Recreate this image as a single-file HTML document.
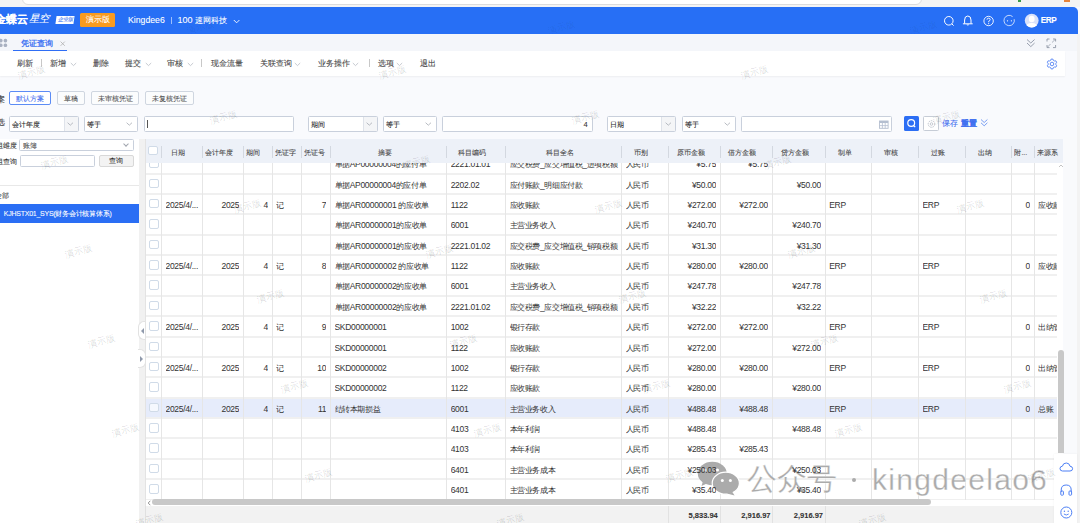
<!DOCTYPE html><html><head><meta charset="utf-8"><style>
*{margin:0;padding:0;box-sizing:border-box}
html,body{width:1080px;height:523px;overflow:hidden}
body{position:relative;background:#f9fafd;font-family:"Liberation Sans",sans-serif;color:#333}
.t,.hd,.btn{-webkit-text-stroke:0.08px currentColor}
.ab{position:absolute}
.t{position:absolute;white-space:nowrap;line-height:1}
.sel{position:absolute;background:#fff;border:1px solid #c9d0dc;border-radius:1.5px}
.dd{position:absolute;top:0;bottom:0;right:0;background:#f4f5f7;border-left:1px solid #dfe3ea}
.chev{position:absolute;width:4px;height:4px;border-right:1px solid #9aa0aa;border-bottom:1px solid #9aa0aa;transform:rotate(45deg)}
.btn{position:absolute;border:1px solid #cfd6e0;border-radius:2px;background:#fbfcfd;font-size:6.9px;color:#555;text-align:center;white-space:nowrap}
.cb{position:absolute;width:9.5px;height:9.5px;border:1px solid #d0dbe8;border-radius:2px;background:#fff}
.vl{position:absolute;width:1px;background:#e6e6e6}
.hl{position:absolute;height:2px;background:#f0f0f0}
.z{font-size:7.6px;letter-spacing:-0.4px}
.cell{position:absolute;white-space:nowrap;overflow:hidden;font-size:8.5px;letter-spacing:-0.3px;color:#333;line-height:20px;height:20.4px;padding-top:1.0px}
.hd{position:absolute;white-space:nowrap;overflow:hidden;font-size:7px;color:#444;line-height:23px;height:23px;padding-top:2.2px}
.wm{position:absolute;font-size:8px;color:rgba(150,150,150,0.22);transform:rotate(-20deg);white-space:nowrap}
</style></head><body>
<div class="ab" style="left:0;top:0;width:1080px;height:7px;background:#f4f4f4"></div>
<div class="ab" style="left:22px;top:-10px;width:900px;height:14.5px;background:#fff;border-radius:6px;border:1px solid #dcdcdc"></div>
<div class="ab" style="left:1018px;top:0;width:3px;height:2px;background:#3a9a48"></div>
<div class="ab" style="left:1064px;top:0;width:6px;height:2px;background:#e8843a"></div>
<div class="ab" style="left:0;top:7px;width:1077.5px;height:26.5px;background:#276ff5;border-top-right-radius:5px"></div>
<div class="t" style="left:-5px;top:14px;font-size:10.8px;color:#fff;font-weight:bold">金蝶云</div>
<div class="t" style="left:29px;top:14.3px;font-size:10.4px;color:#fff;font-style:italic">星空</div>
<div class="ab" style="left:56px;top:15.7px;width:18px;height:7.8px;background:#fff;transform:skewX(-8deg)"></div>
<div class="t" style="left:57.5px;top:17.2px;font-size:5.2px;color:#3a74f0;font-style:italic">企业版</div>
<div class="ab" style="left:80px;top:13px;width:34.5px;height:13.7px;background:#f99b1e;border-radius:1.5px"></div>
<div class="t" style="left:86px;top:16px;font-size:7.8px;color:#fff">演示版</div>
<div class="t" style="left:128px;top:15.7px;font-size:8.7px;color:#fff">Kingdee6</div>
<div class="ab" style="left:170.5px;top:17px;width:0.8px;height:7px;background:rgba(255,255,255,0.55)"></div>
<div class="t" style="left:177.5px;top:15.5px;font-size:9px;color:#fff">100 <span style="font-size:8.2px">速网科技</span></div>
<svg class="ab" style="left:233px;top:19px" width="8" height="5" viewBox="0 0 8 5"><path d="M0.8 1 L3.6 3.8 L6.4 1" fill="none" stroke="#fff" stroke-width="0.9"/></svg>
<svg class="ab" style="left:942px;top:14px" width="14" height="14" viewBox="0 0 14 14"><circle cx="6.8" cy="6.8" r="4.3" fill="none" stroke="#fff" stroke-width="1"/><line x1="9.8" y1="9.8" x2="11.6" y2="11.6" stroke="#fff" stroke-width="1"/></svg>
<svg class="ab" style="left:961px;top:13px" width="14" height="16" viewBox="0 0 14 16"><path d="M3.6 10.6 V7 Q3.6 3 6.8 3 Q10 3 10 7 V10.6" fill="none" stroke="#fff" stroke-width="1"/><path d="M1.9 10.8 H11.7" stroke="#fff" stroke-width="1"/><path d="M5.3 11.6 Q6.8 13.4 8.3 11.6 Z" fill="#fff"/></svg>
<svg class="ab" style="left:982px;top:14px" width="14" height="14" viewBox="0 0 14 14"><circle cx="6.6" cy="7" r="4.7" fill="none" stroke="#fff" stroke-width="0.9"/><path d="M5 5.7 Q5 4.2 6.6 4.2 Q8.2 4.2 8.2 5.6 Q8.2 6.6 6.7 7.2 L6.7 8.3" fill="none" stroke="#fff" stroke-width="0.9"/><circle cx="6.7" cy="9.6" r="0.55" fill="#fff"/></svg>
<svg class="ab" style="left:1003px;top:14px" width="14" height="14" viewBox="0 0 14 14"><path d="M11.2 5.2 A5.2 5.2 0 1 1 9.6 2.6" fill="none" stroke="rgba(255,255,255,0.8)" stroke-width="0.9"/><circle cx="4.5" cy="6.8" r="0.65" fill="#fff"/><circle cx="8.4" cy="6.8" r="0.65" fill="#fff"/></svg>
<svg class="ab" style="left:1024px;top:13.2px" width="16" height="16" viewBox="0 0 16 16"><defs><clipPath id="av"><circle cx="7.7" cy="7.6" r="6.9"/></clipPath></defs><circle cx="7.7" cy="7.6" r="6.9" fill="#d9e2fa"/><g clip-path="url(#av)" fill="#fff"><ellipse cx="7.7" cy="6" rx="2.9" ry="3.3"/><path d="M1.5 15 Q2 10 7.7 10 Q13.4 10 13.9 15 Z"/></g></svg>
<div class="t" style="left:1040.8px;top:16.8px;font-size:8.2px;color:#fff;font-weight:bold;letter-spacing:-0.4px">ERP</div>
<div class="ab" style="left:0;top:33.5px;width:1077px;height:17.8px;background:#f4f6fa"></div>
<div class="ab" style="left:1077px;top:33.5px;width:3px;height:490px;background:#f3f3f3"></div>
<svg class="ab" style="left:-1px;top:37.5px" width="10" height="11" viewBox="0 0 10 11"><rect x="0" y="0.8" width="3.6" height="3.6" rx="1.6" fill="#a9b1c1"/><rect x="4.6" y="0.8" width="3.6" height="3.6" rx="1.6" fill="#a9b1c1"/><rect x="0" y="5.4" width="3.6" height="3.6" rx="1.6" fill="#a9b1c1"/><rect x="4.6" y="5.4" width="3.6" height="3.6" rx="1.6" fill="#a9b1c1"/></svg>
<div class="t" style="left:20.8px;top:38.8px;font-size:8.4px;color:#4274f2;font-weight:bold;-webkit-text-stroke:0">凭证查询</div>
<svg class="ab" style="left:59.5px;top:40.8px" width="6" height="6" viewBox="0 0 6 6"><path d="M0.6 0.6 L4.8 4.8 M4.8 0.6 L0.6 4.8" stroke="#b0b0b0" stroke-width="0.8"/></svg>
<div class="ab" style="left:13px;top:49.7px;width:54px;height:1.3px;background:#2f6ef5"></div>
<svg class="ab" style="left:1026px;top:38px" width="10" height="11" viewBox="0 0 10 11"><path d="M1 1.5 L4.8 5 L8.6 1.5 M1 5 L4.8 8.6 L8.6 5" fill="none" stroke="#8d95a5" stroke-width="0.9"/></svg>
<svg class="ab" style="left:1046px;top:38px" width="11" height="11" viewBox="0 0 11 11"><path d="M1 3.5 V1 H3.5 M7 1 H9.6 V3.5 M9.6 7 V9.6 H7 M3.5 9.6 H1 V7" fill="none" stroke="#8d95a5" stroke-width="0.9"/><path d="M6 4.5 L9 1.6 M4.5 6 L1.6 9" stroke="#8d95a5" stroke-width="0.7"/></svg>
<div class="ab" style="left:0;top:51.3px;width:1065px;height:24.7px;background:#fff;box-shadow:0 1px 1.5px rgba(0,0,0,0.05)"></div>
<div class="t" style="left:16.7px;top:58.7px;font-size:8.3px;color:#444">刷新</div>
<div class="ab" style="left:41.2px;top:59px;width:0.8px;height:8px;background:#c8c8c8"></div>
<div class="t" style="left:50.4px;top:58.7px;font-size:8.3px;color:#444">新增</div>
<svg class="ab" style="left:70px;top:62px" width="8" height="5" viewBox="0 0 8 5"><path d="M0.8 1 L3.5 3.6 L6.2 1" fill="none" stroke="#b8bcc4" stroke-width="0.8"/></svg>
<div class="t" style="left:92.7px;top:58.7px;font-size:8.3px;color:#444">删除</div>
<div class="t" style="left:125.0px;top:58.7px;font-size:8.3px;color:#444">提交</div>
<svg class="ab" style="left:144.5px;top:62px" width="8" height="5" viewBox="0 0 8 5"><path d="M0.8 1 L3.5 3.6 L6.2 1" fill="none" stroke="#b8bcc4" stroke-width="0.8"/></svg>
<div class="t" style="left:167.2px;top:58.7px;font-size:8.3px;color:#444">审核</div>
<svg class="ab" style="left:186.5px;top:62px" width="8" height="5" viewBox="0 0 8 5"><path d="M0.8 1 L3.5 3.6 L6.2 1" fill="none" stroke="#b8bcc4" stroke-width="0.8"/></svg>
<div class="ab" style="left:201.2px;top:59px;width:0.8px;height:8px;background:#c8c8c8"></div>
<div class="t" style="left:211.0px;top:58.7px;font-size:8.3px;color:#444">现金流量</div>
<div class="t" style="left:259.7px;top:58.7px;font-size:8.3px;color:#444">关联查询</div>
<svg class="ab" style="left:294px;top:62px" width="8" height="5" viewBox="0 0 8 5"><path d="M0.8 1 L3.5 3.6 L6.2 1" fill="none" stroke="#b8bcc4" stroke-width="0.8"/></svg>
<div class="t" style="left:318.1px;top:58.7px;font-size:8.3px;color:#444">业务操作</div>
<svg class="ab" style="left:352px;top:62px" width="8" height="5" viewBox="0 0 8 5"><path d="M0.8 1 L3.5 3.6 L6.2 1" fill="none" stroke="#b8bcc4" stroke-width="0.8"/></svg>
<div class="ab" style="left:368.8px;top:59px;width:0.8px;height:8px;background:#c8c8c8"></div>
<div class="t" style="left:377.7px;top:58.7px;font-size:8.3px;color:#444">选项</div>
<svg class="ab" style="left:396px;top:62px" width="8" height="5" viewBox="0 0 8 5"><path d="M0.8 1 L3.5 3.6 L6.2 1" fill="none" stroke="#b8bcc4" stroke-width="0.8"/></svg>
<div class="t" style="left:420.4px;top:58.7px;font-size:8.3px;color:#444">退出</div>
<svg class="ab" style="left:1044.8px;top:57.1px" width="14" height="14" viewBox="0 0 14 14"><path d="M10.90 7.89 L11.69 8.73 L10.84 10.20 L9.72 9.93 L8.18 10.82 L7.85 11.93 L6.15 11.93 L5.82 10.82 L4.28 9.93 L3.16 10.20 L2.31 8.73 L3.10 7.89 L3.10 6.11 L2.31 5.27 L3.16 3.80 L4.28 4.07 L5.82 3.18 L6.15 2.07 L7.85 2.07 L8.18 3.18 L9.72 4.07 L10.84 3.80 L11.69 5.27 L10.90 6.11 Z" fill="none" stroke="#4a7cf3" stroke-width="0.85" stroke-linejoin="round"/><circle cx="7" cy="7" r="1.8" fill="none" stroke="#4a7cf3" stroke-width="0.85"/></svg>
<div class="t" style="left:-3px;top:96px;font-size:7.5px;color:#333">案</div>
<div class="btn" style="left:9.3px;top:90.9px;width:41.8px;height:14.5px;line-height:14.5px;border-color:#5c8cf5;color:#3f6ff0;background:#fff">默认方案</div>
<div class="btn" style="left:57px;top:90.9px;width:27.799999999999997px;height:14.5px;line-height:14.5px;">草稿</div>
<div class="btn" style="left:90.7px;top:90.9px;width:48.7px;height:14.5px;line-height:14.5px;">未审核凭证</div>
<div class="btn" style="left:145.4px;top:90.9px;width:49.0px;height:14.5px;line-height:14.5px;">未复核凭证</div>
<div class="t" style="left:-3.5px;top:119px;font-size:7.5px;color:#333">选</div>
<div class="sel" style="left:9.2px;top:116.3px;width:69.39999999999999px;height:15.4px">
<div class="t" style="left:2.2px;top:3.7px;font-size:7px;color:#222">会计年度</div>
<div class="dd" style="width:14px"></div>
<svg class="ab" style="right:3.5px;top:4.6px" width="7" height="4" viewBox="0 0 7 4"><path d="M0.6 0.7 L3.3 3.2 L6 0.7" fill="none" stroke="#a6abb3" stroke-width="0.8"/></svg>
</div>
<div class="sel" style="left:84.2px;top:116.3px;width:54.10000000000001px;height:15.4px">
<div class="t" style="left:2.2px;top:3.7px;font-size:7px;color:#222">等于</div>
<svg class="ab" style="right:3.8px;top:4.6px" width="7" height="4" viewBox="0 0 7 4"><path d="M0.6 0.7 L3.3 3.2 L6 0.7" fill="none" stroke="#a6abb3" stroke-width="0.8"/></svg>
</div>
<div class="sel" style="left:143.6px;top:116.3px;width:150.50000000000003px;height:15.4px"><div class="ab" style="left:2.5px;top:3px;width:0.8px;height:8px;background:#555"></div></div>
<div class="sel" style="left:308px;top:116.3px;width:69.5px;height:15.4px">
<div class="t" style="left:2.2px;top:3.7px;font-size:7px;color:#222">期间</div>
<div class="dd" style="width:14px"></div>
<svg class="ab" style="right:3.5px;top:4.6px" width="7" height="4" viewBox="0 0 7 4"><path d="M0.6 0.7 L3.3 3.2 L6 0.7" fill="none" stroke="#a6abb3" stroke-width="0.8"/></svg>
</div>
<div class="sel" style="left:383px;top:116.3px;width:54px;height:15.4px">
<div class="t" style="left:2.2px;top:3.7px;font-size:7px;color:#222">等于</div>
<svg class="ab" style="right:3.8px;top:4.6px" width="7" height="4" viewBox="0 0 7 4"><path d="M0.6 0.7 L3.3 3.2 L6 0.7" fill="none" stroke="#a6abb3" stroke-width="0.8"/></svg>
</div>
<div class="sel" style="left:442.4px;top:116.3px;width:150.39999999999998px;height:15.4px"><div class="t" style="right:4px;top:4px;font-size:7.5px;color:#333">4</div></div>
<div class="sel" style="left:606.7px;top:116.3px;width:69.79999999999995px;height:15.4px">
<div class="t" style="left:2.2px;top:3.7px;font-size:7px;color:#222">日期</div>
<div class="dd" style="width:14px"></div>
<svg class="ab" style="right:3.5px;top:4.6px" width="7" height="4" viewBox="0 0 7 4"><path d="M0.6 0.7 L3.3 3.2 L6 0.7" fill="none" stroke="#a6abb3" stroke-width="0.8"/></svg>
</div>
<div class="sel" style="left:681.7px;top:116.3px;width:54.0px;height:15.4px">
<div class="t" style="left:2.2px;top:3.7px;font-size:7px;color:#222">等于</div>
<svg class="ab" style="right:3.8px;top:4.6px" width="7" height="4" viewBox="0 0 7 4"><path d="M0.6 0.7 L3.3 3.2 L6 0.7" fill="none" stroke="#a6abb3" stroke-width="0.8"/></svg>
</div>
<div class="sel" style="left:741.3px;top:116.3px;width:150.5px;height:15.4px"><svg class="ab" style="right:2px;top:2.5px" width="10" height="9" viewBox="0 0 10 9"><rect x="0.5" y="1" width="8.6" height="7.3" fill="none" stroke="#b5bfd0" stroke-width="0.9"/><rect x="0.5" y="1" width="8.6" height="2" fill="#b5bfd0"/><path d="M3.4 3 V8.3 M6.2 3 V8.3 M0.5 5.6 H9.1" stroke="#b5bfd0" stroke-width="0.8"/></svg></div>
<div class="ab" style="left:903.7px;top:115.9px;width:15px;height:14.8px;background:#2c6ef4;border-radius:1.5px"></div>
<svg class="ab" style="left:904px;top:116px" width="15" height="15" viewBox="0 0 15 15"><circle cx="7.2" cy="7" r="3.4" fill="none" stroke="#fff" stroke-width="1.2"/><line x1="9.6" y1="9.5" x2="11.2" y2="11.1" stroke="#fff" stroke-width="1.2"/></svg>
<div class="ab" style="left:923.2px;top:116px;width:15.4px;height:14.8px;border:1px solid #c6ccd6;border-radius:1.5px;background:#fff"></div>
<svg class="ab" style="left:923.5px;top:116.5px" width="15" height="14" viewBox="0 0 15 14"><circle cx="7.5" cy="7" r="3.3" fill="none" stroke="#b8bec8" stroke-width="0.9" stroke-dasharray="1.6 0.8"/><circle cx="7.5" cy="7" r="1.3" fill="none" stroke="#b8bec8" stroke-width="0.8"/></svg>
<div class="t" style="left:941.5px;top:119.5px;font-size:8px;color:#3f6ff0">保存</div>
<div class="t" style="left:961px;top:119.5px;font-size:8px;color:#3f6ff0;font-weight:bold">重置</div>
<svg class="ab" style="left:980px;top:118px" width="9" height="11" viewBox="0 0 9 11"><path d="M1 1.5 L4.2 4.5 L7.4 1.5 M1 4.8 L4.2 7.8 L7.4 4.8" fill="none" stroke="#6b93f0" stroke-width="0.9"/></svg>
<div class="ab" style="left:0;top:138.6px;width:138.8px;height:386.5px;background:#fff"></div>
<div class="ab" style="left:138.8px;top:138.6px;width:6.8px;height:386.5px;background:#f1f1f1"></div>
<div class="t" style="left:-4.5px;top:142.2px;font-size:7px;color:#333">组维度</div>
<div class="sel" style="left:19.4px;top:139.3px;width:114.3px;height:11.5px"><div class="t" style="left:2.5px;top:1.8px;font-size:7px;color:#555">账簿</div><div class="chev" style="right:5px;top:1.5px;border-color:#a0a5ae"></div></div>
<div class="t" style="left:-4.5px;top:157.8px;font-size:7px;color:#333">组查询</div>
<div class="sel" style="left:20.1px;top:155.1px;width:74.6px;height:11.7px"></div>
<div class="btn" style="left:99.3px;top:155.1px;width:34.4px;height:11.7px;line-height:9.7px;background:#f3f3f3;border-color:#d8d8d8;color:#333;font-size:7px">查询</div>
<div class="ab" style="left:0;top:185px;width:138.8px;height:1px;background:#e8e8e8"></div>
<div class="t" style="left:-5px;top:191.5px;font-size:7px;color:#333">全部</div>
<div class="ab" style="left:0;top:204.2px;width:138.5px;height:18.6px;background:#2a6ef4"></div>
<div class="t" style="left:3.8px;top:209.5px;font-size:7px;color:#fff;letter-spacing:-0.25px">KJHSTX01_SYS(财务会计核算体系)</div>
<div class="ab" style="left:138.2px;top:321.3px;width:8px;height:18.3px;background:#fff;border:1px solid #e2e2e2;border-right:none;border-radius:6px 0 0 6px"></div>
<div class="ab" style="left:140.8px;top:327.8px;width:0;height:0;border-top:3.3px solid transparent;border-bottom:3.3px solid transparent;border-right:3.6px solid #8f99ab"></div>
<div class="ab" style="left:137.5px;top:348.8px;width:8px;height:19px;background:#fff;border:1px solid #e2e2e2;border-left:none;border-radius:0 6px 6px 0"></div>
<div class="ab" style="left:139.6px;top:355.8px;width:0;height:0;border-top:3.3px solid transparent;border-bottom:3.3px solid transparent;border-left:3.6px solid #8f99ab"></div>
<div class="ab" style="left:145.6px;top:139px;width:917.9px;height:384px;background:#fff"></div>
<div class="ab" style="left:145.6px;top:139px;width:917.9px;height:23.5px;background:#edf1f8"></div>
<div class="ab" style="left:145.6px;top:397.625px;width:911.6999999999999px;height:20.375px;background:#e6ecfb"></div>
<div class="hl" style="left:145.6px;top:172.5px;width:911.6999999999999px"></div>
<div class="hl" style="left:145.6px;top:192.875px;width:911.6999999999999px"></div>
<div class="hl" style="left:145.6px;top:213.25px;width:911.6999999999999px"></div>
<div class="hl" style="left:145.6px;top:233.625px;width:911.6999999999999px"></div>
<div class="hl" style="left:145.6px;top:254.0px;width:911.6999999999999px"></div>
<div class="hl" style="left:145.6px;top:274.375px;width:911.6999999999999px"></div>
<div class="hl" style="left:145.6px;top:294.75px;width:911.6999999999999px"></div>
<div class="hl" style="left:145.6px;top:315.125px;width:911.6999999999999px"></div>
<div class="hl" style="left:145.6px;top:335.5px;width:911.6999999999999px"></div>
<div class="hl" style="left:145.6px;top:355.875px;width:911.6999999999999px"></div>
<div class="hl" style="left:145.6px;top:376.25px;width:911.6999999999999px"></div>
<div class="hl" style="left:145.6px;top:396.625px;width:911.6999999999999px"></div>
<div class="hl" style="left:145.6px;top:417.0px;width:911.6999999999999px"></div>
<div class="hl" style="left:145.6px;top:437.375px;width:911.6999999999999px"></div>
<div class="hl" style="left:145.6px;top:457.75px;width:911.6999999999999px"></div>
<div class="hl" style="left:145.6px;top:478.125px;width:911.6999999999999px"></div>
<div class="hl" style="left:145.6px;top:498.5px;width:911.6999999999999px"></div>
<div class="vl" style="left:161.2px;top:162.5px;height:337px"></div>
<div class="vl" style="left:202.1px;top:162.5px;height:337px"></div>
<div class="vl" style="left:243.2px;top:162.5px;height:337px"></div>
<div class="vl" style="left:271.9px;top:162.5px;height:337px"></div>
<div class="vl" style="left:301.0px;top:162.5px;height:337px"></div>
<div class="vl" style="left:330.2px;top:162.5px;height:337px"></div>
<div class="vl" style="left:446.4px;top:162.5px;height:337px"></div>
<div class="vl" style="left:505.2px;top:162.5px;height:337px"></div>
<div class="vl" style="left:621.2px;top:162.5px;height:337px"></div>
<div class="vl" style="left:668.0px;top:162.5px;height:337px"></div>
<div class="vl" style="left:720.1px;top:162.5px;height:337px"></div>
<div class="vl" style="left:771.9px;top:162.5px;height:337px"></div>
<div class="vl" style="left:824.9px;top:162.5px;height:337px"></div>
<div class="vl" style="left:871.3px;top:162.5px;height:337px"></div>
<div class="vl" style="left:918.2px;top:162.5px;height:337px"></div>
<div class="vl" style="left:964.7px;top:162.5px;height:337px"></div>
<div class="vl" style="left:1011.4px;top:162.5px;height:337px"></div>
<div class="vl" style="left:1034.0px;top:162.5px;height:337px"></div>
<div class="vl" style="left:145.1px;top:139px;height:384px;background:#e3e3e3"></div>
<div class="vl" style="left:161.2px;top:145.5px;height:12px;background:#d3d8e0"></div>
<div class="hd" style="left:161.7px;top:139px;width:32.900000000000006px;text-align:center">日期</div>
<div class="vl" style="left:202.1px;top:145.5px;height:12px;background:#d3d8e0"></div>
<div class="hd" style="left:205.1px;top:139px;width:39.099999999999994px">会计年度</div>
<div class="vl" style="left:243.2px;top:145.5px;height:12px;background:#d3d8e0"></div>
<div class="hd" style="left:246.2px;top:139px;width:26.69999999999999px">期间</div>
<div class="vl" style="left:271.9px;top:145.5px;height:12px;background:#d3d8e0"></div>
<div class="hd" style="left:274.9px;top:139px;width:27.100000000000023px">凭证字</div>
<div class="vl" style="left:301.0px;top:145.5px;height:12px;background:#d3d8e0"></div>
<div class="hd" style="left:304.0px;top:139px;width:27.19999999999999px">凭证号</div>
<div class="vl" style="left:330.2px;top:145.5px;height:12px;background:#d3d8e0"></div>
<div class="hd" style="left:330.7px;top:139px;width:108.19999999999999px;text-align:center">摘要</div>
<div class="vl" style="left:446.4px;top:145.5px;height:12px;background:#d3d8e0"></div>
<div class="hd" style="left:446.9px;top:139px;width:50.80000000000001px;text-align:center">科目编码</div>
<div class="vl" style="left:505.2px;top:145.5px;height:12px;background:#d3d8e0"></div>
<div class="hd" style="left:505.7px;top:139px;width:108.00000000000006px;text-align:center">科目全名</div>
<div class="vl" style="left:621.2px;top:145.5px;height:12px;background:#d3d8e0"></div>
<div class="hd" style="left:621.7px;top:139px;width:38.799999999999955px;text-align:center">币别</div>
<div class="vl" style="left:668.0px;top:145.5px;height:12px;background:#d3d8e0"></div>
<div class="hd" style="left:668.5px;top:139px;width:44.10000000000002px;text-align:center">原币金额</div>
<div class="vl" style="left:720.1px;top:145.5px;height:12px;background:#d3d8e0"></div>
<div class="hd" style="left:720.6px;top:139px;width:43.799999999999955px;text-align:center">借方金额</div>
<div class="vl" style="left:771.9px;top:145.5px;height:12px;background:#d3d8e0"></div>
<div class="hd" style="left:772.4px;top:139px;width:45.0px;text-align:center">贷方金额</div>
<div class="vl" style="left:824.9px;top:145.5px;height:12px;background:#d3d8e0"></div>
<div class="hd" style="left:825.4px;top:139px;width:38.39999999999998px;text-align:center">制单</div>
<div class="vl" style="left:871.3px;top:145.5px;height:12px;background:#d3d8e0"></div>
<div class="hd" style="left:871.8px;top:139px;width:38.90000000000009px;text-align:center">审核</div>
<div class="vl" style="left:918.2px;top:145.5px;height:12px;background:#d3d8e0"></div>
<div class="hd" style="left:918.7px;top:139px;width:38.5px;text-align:center">过账</div>
<div class="vl" style="left:964.7px;top:145.5px;height:12px;background:#d3d8e0"></div>
<div class="hd" style="left:965.2px;top:139px;width:38.69999999999993px;text-align:center">出纳</div>
<div class="vl" style="left:1011.4px;top:145.5px;height:12px;background:#d3d8e0"></div>
<div class="hd" style="left:1014.4px;top:139px;width:20.600000000000023px">附...</div>
<div class="vl" style="left:1034.0px;top:145.5px;height:12px;background:#d3d8e0"></div>
<div class="hd" style="left:1037.0px;top:139px;width:26.5px">来源系</div>
<div class="cb" style="left:148.4px;top:146.3px;width:9.2px;height:9.2px"></div>
<svg class="ab" style="left:696px;top:460px" width="46" height="36" viewBox="0 0 46 36"><ellipse cx="16.3" cy="13.5" rx="14.5" ry="11.8" fill="#ababab"/><path d="M7 21 L5.5 26 L12 23 Z" fill="#ababab"/><ellipse cx="29.8" cy="23.2" rx="13.6" ry="11" fill="#ababab" stroke="#fff" stroke-width="1.2"/><path d="M36 31.5 L38.6 35.4 L31 33.5 Z" fill="#ababab"/><circle cx="9" cy="10" r="1.5" fill="#fff"/><circle cx="21.5" cy="10" r="1.5" fill="#fff"/><circle cx="26.3" cy="20.5" r="1.5" fill="#fff"/><circle cx="34.4" cy="20.5" r="1.5" fill="#fff"/></svg>
<div class="t" style="left:747px;top:464px;font-size:30px;color:#ababab;-webkit-text-stroke:0.3px #fff">公众号</div>
<div class="ab" style="left:852px;top:478px;width:4px;height:4px;border-radius:2px;background:#ababab"></div>
<div class="t" style="left:872px;top:465px;font-size:30px;color:#ababab;letter-spacing:1.3px;-webkit-text-stroke:0.3px #fff">kingdeelao6</div>
<div class="ab" style="left:0;top:162.5px;width:1080px;height:337px;overflow:hidden">
<div class="cb" style="left:149px;top:-4.375px;"></div>
<div class="cell" style="left:334.5px;top:-9.375px;width:112.39999999999999px"><span class="z">单据</span>AP00000004<span class="z">的应付单</span></div>
<div class="cell" style="left:450.7px;top:-9.375px;width:55.000000000000014px">2221.01.01</div>
<div class="cell" style="left:509.5px;top:-9.375px;width:112.20000000000006px"><span class="z">应交税费</span>_<span class="z">应交增值税</span>_<span class="z">进项税额</span></div>
<div class="cell" style="left:625.5px;top:-9.375px;width:42.99999999999996px"><span class="z">人民币</span></div>
<div class="cell" style="left:668.5px;top:-9.375px;width:47.60000000000002px;text-align:right">¥5.75</div>
<div class="cell" style="left:720.6px;top:-9.375px;width:47.299999999999955px;text-align:right">¥5.75</div>
<div class="cb" style="left:149px;top:16.0px;"></div>
<div class="cell" style="left:334.5px;top:11.0px;width:112.39999999999999px"><span class="z">单据</span>AP00000004<span class="z">的应付单</span></div>
<div class="cell" style="left:450.7px;top:11.0px;width:55.000000000000014px">2202.02</div>
<div class="cell" style="left:509.5px;top:11.0px;width:112.20000000000006px"><span class="z">应付账款</span>_<span class="z">明细应付款</span></div>
<div class="cell" style="left:625.5px;top:11.0px;width:42.99999999999996px"><span class="z">人民币</span></div>
<div class="cell" style="left:668.5px;top:11.0px;width:47.60000000000002px;text-align:right">¥50.00</div>
<div class="cell" style="left:772.4px;top:11.0px;width:48.5px;text-align:right">¥50.00</div>
<div class="cb" style="left:149px;top:36.375px;"></div>
<div class="cell" style="left:165.5px;top:31.375px;width:37.10000000000001px">2025/4/...</div>
<div class="cell" style="left:202.6px;top:31.375px;width:36.599999999999994px;text-align:right">2025</div>
<div class="cell" style="left:243.7px;top:31.375px;width:24.19999999999999px;text-align:right">4</div>
<div class="cell" style="left:276.2px;top:31.375px;width:25.300000000000022px"><span class="z">记</span></div>
<div class="cell" style="left:301.5px;top:31.375px;width:24.69999999999999px;text-align:right">7</div>
<div class="cell" style="left:334.5px;top:31.375px;width:112.39999999999999px"><span class="z">单据</span>AR00000001 <span class="z">的应收单</span></div>
<div class="cell" style="left:450.7px;top:31.375px;width:55.000000000000014px">1122</div>
<div class="cell" style="left:509.5px;top:31.375px;width:112.20000000000006px"><span class="z">应收账款</span></div>
<div class="cell" style="left:625.5px;top:31.375px;width:42.99999999999996px"><span class="z">人民币</span></div>
<div class="cell" style="left:668.5px;top:31.375px;width:47.60000000000002px;text-align:right">¥272.00</div>
<div class="cell" style="left:720.6px;top:31.375px;width:47.299999999999955px;text-align:right">¥272.00</div>
<div class="cell" style="left:829.1999999999999px;top:31.375px;width:42.59999999999998px">ERP</div>
<div class="cell" style="left:922.5px;top:31.375px;width:42.7px">ERP</div>
<div class="cell" style="left:1011.9px;top:31.375px;width:18.100000000000023px;text-align:right">0</div>
<div class="cell" style="left:1038.3px;top:31.375px;width:18.999999999999954px"><span class="z">应收款管理</span></div>
<div class="cb" style="left:149px;top:56.75px;"></div>
<div class="cell" style="left:334.5px;top:51.75px;width:112.39999999999999px"><span class="z">单据</span>AR00000001<span class="z">的应收单</span></div>
<div class="cell" style="left:450.7px;top:51.75px;width:55.000000000000014px">6001</div>
<div class="cell" style="left:509.5px;top:51.75px;width:112.20000000000006px"><span class="z">主营业务收入</span></div>
<div class="cell" style="left:625.5px;top:51.75px;width:42.99999999999996px"><span class="z">人民币</span></div>
<div class="cell" style="left:668.5px;top:51.75px;width:47.60000000000002px;text-align:right">¥240.70</div>
<div class="cell" style="left:772.4px;top:51.75px;width:48.5px;text-align:right">¥240.70</div>
<div class="cb" style="left:149px;top:77.125px;"></div>
<div class="cell" style="left:334.5px;top:72.125px;width:112.39999999999999px"><span class="z">单据</span>AR00000001<span class="z">的应收单</span></div>
<div class="cell" style="left:450.7px;top:72.125px;width:55.000000000000014px">2221.01.02</div>
<div class="cell" style="left:509.5px;top:72.125px;width:112.20000000000006px"><span class="z">应交税费</span>_<span class="z">应交增值税</span>_<span class="z">销项税额</span></div>
<div class="cell" style="left:625.5px;top:72.125px;width:42.99999999999996px"><span class="z">人民币</span></div>
<div class="cell" style="left:668.5px;top:72.125px;width:47.60000000000002px;text-align:right">¥31.30</div>
<div class="cell" style="left:772.4px;top:72.125px;width:48.5px;text-align:right">¥31.30</div>
<div class="cb" style="left:149px;top:97.5px;"></div>
<div class="cell" style="left:165.5px;top:92.5px;width:37.10000000000001px">2025/4/...</div>
<div class="cell" style="left:202.6px;top:92.5px;width:36.599999999999994px;text-align:right">2025</div>
<div class="cell" style="left:243.7px;top:92.5px;width:24.19999999999999px;text-align:right">4</div>
<div class="cell" style="left:276.2px;top:92.5px;width:25.300000000000022px"><span class="z">记</span></div>
<div class="cell" style="left:301.5px;top:92.5px;width:24.69999999999999px;text-align:right">8</div>
<div class="cell" style="left:334.5px;top:92.5px;width:112.39999999999999px"><span class="z">单据</span>AR00000002 <span class="z">的应收单</span></div>
<div class="cell" style="left:450.7px;top:92.5px;width:55.000000000000014px">1122</div>
<div class="cell" style="left:509.5px;top:92.5px;width:112.20000000000006px"><span class="z">应收账款</span></div>
<div class="cell" style="left:625.5px;top:92.5px;width:42.99999999999996px"><span class="z">人民币</span></div>
<div class="cell" style="left:668.5px;top:92.5px;width:47.60000000000002px;text-align:right">¥280.00</div>
<div class="cell" style="left:720.6px;top:92.5px;width:47.299999999999955px;text-align:right">¥280.00</div>
<div class="cell" style="left:829.1999999999999px;top:92.5px;width:42.59999999999998px">ERP</div>
<div class="cell" style="left:922.5px;top:92.5px;width:42.7px">ERP</div>
<div class="cell" style="left:1011.9px;top:92.5px;width:18.100000000000023px;text-align:right">0</div>
<div class="cell" style="left:1038.3px;top:92.5px;width:18.999999999999954px"><span class="z">应收款管理</span></div>
<div class="cb" style="left:149px;top:117.875px;"></div>
<div class="cell" style="left:334.5px;top:112.875px;width:112.39999999999999px"><span class="z">单据</span>AR00000002<span class="z">的应收单</span></div>
<div class="cell" style="left:450.7px;top:112.875px;width:55.000000000000014px">6001</div>
<div class="cell" style="left:509.5px;top:112.875px;width:112.20000000000006px"><span class="z">主营业务收入</span></div>
<div class="cell" style="left:625.5px;top:112.875px;width:42.99999999999996px"><span class="z">人民币</span></div>
<div class="cell" style="left:668.5px;top:112.875px;width:47.60000000000002px;text-align:right">¥247.78</div>
<div class="cell" style="left:772.4px;top:112.875px;width:48.5px;text-align:right">¥247.78</div>
<div class="cb" style="left:149px;top:138.25px;"></div>
<div class="cell" style="left:334.5px;top:133.25px;width:112.39999999999999px"><span class="z">单据</span>AR00000002<span class="z">的应收单</span></div>
<div class="cell" style="left:450.7px;top:133.25px;width:55.000000000000014px">2221.01.02</div>
<div class="cell" style="left:509.5px;top:133.25px;width:112.20000000000006px"><span class="z">应交税费</span>_<span class="z">应交增值税</span>_<span class="z">销项税额</span></div>
<div class="cell" style="left:625.5px;top:133.25px;width:42.99999999999996px"><span class="z">人民币</span></div>
<div class="cell" style="left:668.5px;top:133.25px;width:47.60000000000002px;text-align:right">¥32.22</div>
<div class="cell" style="left:772.4px;top:133.25px;width:48.5px;text-align:right">¥32.22</div>
<div class="cb" style="left:149px;top:158.625px;"></div>
<div class="cell" style="left:165.5px;top:153.625px;width:37.10000000000001px">2025/4/...</div>
<div class="cell" style="left:202.6px;top:153.625px;width:36.599999999999994px;text-align:right">2025</div>
<div class="cell" style="left:243.7px;top:153.625px;width:24.19999999999999px;text-align:right">4</div>
<div class="cell" style="left:276.2px;top:153.625px;width:25.300000000000022px"><span class="z">记</span></div>
<div class="cell" style="left:301.5px;top:153.625px;width:24.69999999999999px;text-align:right">9</div>
<div class="cell" style="left:334.5px;top:153.625px;width:112.39999999999999px">SKD00000001</div>
<div class="cell" style="left:450.7px;top:153.625px;width:55.000000000000014px">1002</div>
<div class="cell" style="left:509.5px;top:153.625px;width:112.20000000000006px"><span class="z">银行存款</span></div>
<div class="cell" style="left:625.5px;top:153.625px;width:42.99999999999996px"><span class="z">人民币</span></div>
<div class="cell" style="left:668.5px;top:153.625px;width:47.60000000000002px;text-align:right">¥272.00</div>
<div class="cell" style="left:720.6px;top:153.625px;width:47.299999999999955px;text-align:right">¥272.00</div>
<div class="cell" style="left:829.1999999999999px;top:153.625px;width:42.59999999999998px">ERP</div>
<div class="cell" style="left:922.5px;top:153.625px;width:42.7px">ERP</div>
<div class="cell" style="left:1011.9px;top:153.625px;width:18.100000000000023px;text-align:right">0</div>
<div class="cell" style="left:1038.3px;top:153.625px;width:18.999999999999954px"><span class="z">出纳管理</span></div>
<div class="cb" style="left:149px;top:179.0px;"></div>
<div class="cell" style="left:334.5px;top:174.0px;width:112.39999999999999px">SKD00000001</div>
<div class="cell" style="left:450.7px;top:174.0px;width:55.000000000000014px">1122</div>
<div class="cell" style="left:509.5px;top:174.0px;width:112.20000000000006px"><span class="z">应收账款</span></div>
<div class="cell" style="left:625.5px;top:174.0px;width:42.99999999999996px"><span class="z">人民币</span></div>
<div class="cell" style="left:668.5px;top:174.0px;width:47.60000000000002px;text-align:right">¥272.00</div>
<div class="cell" style="left:772.4px;top:174.0px;width:48.5px;text-align:right">¥272.00</div>
<div class="cb" style="left:149px;top:199.375px;"></div>
<div class="cell" style="left:165.5px;top:194.375px;width:37.10000000000001px">2025/4/...</div>
<div class="cell" style="left:202.6px;top:194.375px;width:36.599999999999994px;text-align:right">2025</div>
<div class="cell" style="left:243.7px;top:194.375px;width:24.19999999999999px;text-align:right">4</div>
<div class="cell" style="left:276.2px;top:194.375px;width:25.300000000000022px"><span class="z">记</span></div>
<div class="cell" style="left:301.5px;top:194.375px;width:24.69999999999999px;text-align:right">10</div>
<div class="cell" style="left:334.5px;top:194.375px;width:112.39999999999999px">SKD00000002</div>
<div class="cell" style="left:450.7px;top:194.375px;width:55.000000000000014px">1002</div>
<div class="cell" style="left:509.5px;top:194.375px;width:112.20000000000006px"><span class="z">银行存款</span></div>
<div class="cell" style="left:625.5px;top:194.375px;width:42.99999999999996px"><span class="z">人民币</span></div>
<div class="cell" style="left:668.5px;top:194.375px;width:47.60000000000002px;text-align:right">¥280.00</div>
<div class="cell" style="left:720.6px;top:194.375px;width:47.299999999999955px;text-align:right">¥280.00</div>
<div class="cell" style="left:829.1999999999999px;top:194.375px;width:42.59999999999998px">ERP</div>
<div class="cell" style="left:922.5px;top:194.375px;width:42.7px">ERP</div>
<div class="cell" style="left:1011.9px;top:194.375px;width:18.100000000000023px;text-align:right">0</div>
<div class="cell" style="left:1038.3px;top:194.375px;width:18.999999999999954px"><span class="z">出纳管理</span></div>
<div class="cb" style="left:149px;top:219.75px;"></div>
<div class="cell" style="left:334.5px;top:214.75px;width:112.39999999999999px">SKD00000002</div>
<div class="cell" style="left:450.7px;top:214.75px;width:55.000000000000014px">1122</div>
<div class="cell" style="left:509.5px;top:214.75px;width:112.20000000000006px"><span class="z">应收账款</span></div>
<div class="cell" style="left:625.5px;top:214.75px;width:42.99999999999996px"><span class="z">人民币</span></div>
<div class="cell" style="left:668.5px;top:214.75px;width:47.60000000000002px;text-align:right">¥280.00</div>
<div class="cell" style="left:772.4px;top:214.75px;width:48.5px;text-align:right">¥280.00</div>
<div class="cb" style="left:149px;top:240.125px;background:#f5f8fe;"></div>
<div class="cell" style="left:165.5px;top:235.125px;width:37.10000000000001px">2025/4/...</div>
<div class="cell" style="left:202.6px;top:235.125px;width:36.599999999999994px;text-align:right">2025</div>
<div class="cell" style="left:243.7px;top:235.125px;width:24.19999999999999px;text-align:right">4</div>
<div class="cell" style="left:276.2px;top:235.125px;width:25.300000000000022px"><span class="z">记</span></div>
<div class="cell" style="left:301.5px;top:235.125px;width:24.69999999999999px;text-align:right">11</div>
<div class="cell" style="left:334.5px;top:235.125px;width:112.39999999999999px"><span class="z">结转本期损益</span></div>
<div class="cell" style="left:450.7px;top:235.125px;width:55.000000000000014px">6001</div>
<div class="cell" style="left:509.5px;top:235.125px;width:112.20000000000006px"><span class="z">主营业务收入</span></div>
<div class="cell" style="left:625.5px;top:235.125px;width:42.99999999999996px"><span class="z">人民币</span></div>
<div class="cell" style="left:668.5px;top:235.125px;width:47.60000000000002px;text-align:right">¥488.48</div>
<div class="cell" style="left:720.6px;top:235.125px;width:47.299999999999955px;text-align:right">¥488.48</div>
<div class="cell" style="left:829.1999999999999px;top:235.125px;width:42.59999999999998px">ERP</div>
<div class="cell" style="left:922.5px;top:235.125px;width:42.7px">ERP</div>
<div class="cell" style="left:1011.9px;top:235.125px;width:18.100000000000023px;text-align:right">0</div>
<div class="cell" style="left:1038.3px;top:235.125px;width:18.999999999999954px"><span class="z">总账</span></div>
<div class="cb" style="left:149px;top:260.5px;"></div>
<div class="cell" style="left:450.7px;top:255.5px;width:55.000000000000014px">4103</div>
<div class="cell" style="left:509.5px;top:255.5px;width:112.20000000000006px"><span class="z">本年利润</span></div>
<div class="cell" style="left:625.5px;top:255.5px;width:42.99999999999996px"><span class="z">人民币</span></div>
<div class="cell" style="left:668.5px;top:255.5px;width:47.60000000000002px;text-align:right">¥488.48</div>
<div class="cell" style="left:772.4px;top:255.5px;width:48.5px;text-align:right">¥488.48</div>
<div class="cb" style="left:149px;top:280.875px;"></div>
<div class="cell" style="left:450.7px;top:275.875px;width:55.000000000000014px">4103</div>
<div class="cell" style="left:509.5px;top:275.875px;width:112.20000000000006px"><span class="z">本年利润</span></div>
<div class="cell" style="left:625.5px;top:275.875px;width:42.99999999999996px"><span class="z">人民币</span></div>
<div class="cell" style="left:668.5px;top:275.875px;width:47.60000000000002px;text-align:right">¥285.43</div>
<div class="cell" style="left:720.6px;top:275.875px;width:47.299999999999955px;text-align:right">¥285.43</div>
<div class="cb" style="left:149px;top:301.25px;"></div>
<div class="cell" style="left:450.7px;top:296.25px;width:55.000000000000014px">6401</div>
<div class="cell" style="left:509.5px;top:296.25px;width:112.20000000000006px"><span class="z">主营业务成本</span></div>
<div class="cell" style="left:625.5px;top:296.25px;width:42.99999999999996px"><span class="z">人民币</span></div>
<div class="cell" style="left:668.5px;top:296.25px;width:47.60000000000002px;text-align:right">¥250.03</div>
<div class="cell" style="left:772.4px;top:296.25px;width:48.5px;text-align:right">¥250.03</div>
<div class="cb" style="left:149px;top:321.625px;"></div>
<div class="cell" style="left:450.7px;top:316.625px;width:55.000000000000014px">6401</div>
<div class="cell" style="left:509.5px;top:316.625px;width:112.20000000000006px"><span class="z">主营业务成本</span></div>
<div class="cell" style="left:625.5px;top:316.625px;width:42.99999999999996px"><span class="z">人民币</span></div>
<div class="cell" style="left:668.5px;top:316.625px;width:47.60000000000002px;text-align:right">¥35.40</div>
<div class="cell" style="left:772.4px;top:316.625px;width:48.5px;text-align:right">¥35.40</div>
</div>
<div class="ab" style="left:145.6px;top:499.5px;width:911.6999999999999px;height:6px;background:#fff"></div>
<svg class="ab" style="left:147px;top:499.5px" width="5" height="6" viewBox="0 0 5 6"><path d="M3.3 0.8 L1.2 3 L3.3 5.2" fill="none" stroke="#777" stroke-width="0.8"/></svg>
<div class="ab" style="left:152px;top:499.3px;width:778.5px;height:6.2px;background:#c8c8c8;border-radius:3px"></div>
<div class="ab" style="left:145.6px;top:505.6px;width:917.9px;height:18px;background:#f2f2f2"></div>
<div class="vl" style="left:145.1px;top:505.6px;height:18px;background:#e0e0e0"></div>
<div class="vl" style="left:668.0px;top:505.6px;height:18px;background:#e2e2e2"></div>
<div class="vl" style="left:720.1px;top:505.6px;height:18px;background:#e2e2e2"></div>
<div class="vl" style="left:771.9px;top:505.6px;height:18px;background:#e2e2e2"></div>
<div class="vl" style="left:824.9px;top:505.6px;height:18px;background:#e2e2e2"></div>
<div class="t" style="left:657.8px;width:60px;text-align:right;top:511.8px;font-size:7.5px;font-weight:bold;color:#333">5,833.94</div>
<div class="t" style="left:710.5px;width:60px;text-align:right;top:511.8px;font-size:7.5px;font-weight:bold;color:#333">2,916.97</div>
<div class="t" style="left:763px;width:60px;text-align:right;top:511.8px;font-size:7.5px;font-weight:bold;color:#333">2,916.97</div>
<div class="ab" style="left:1057.3px;top:162.5px;width:6.2px;height:343px;background:#fff"></div>
<svg class="ab" style="left:1057.5px;top:163px" width="6" height="6" viewBox="0 0 6 6"><path d="M1 4 L3 2 L5 4" fill="none" stroke="#aaa" stroke-width="0.7"/></svg>
<div class="ab" style="left:1058px;top:350.4px;width:5.7px;height:102.6px;background:#c8c8c8;border-radius:3px 3px 0 0"></div>
<div class="ab" style="left:1063.5px;top:136.5px;width:13.5px;height:387px;background:#f9fafc"></div>
<div class="ab" style="left:1054.4px;top:453.5px;width:22.6px;height:70px;background:#fff;box-shadow:0 0 2px rgba(0,0,0,0.06)"></div>
<svg class="ab" style="left:1059px;top:461px" width="15" height="12" viewBox="0 0 15 12"><path d="M3.5 10 Q1 10 1 7.6 Q1 5.3 3.4 5.2 Q4 2 7.3 2 Q10.4 2 11 5.2 Q13.6 5.4 13.6 7.7 Q13.6 10 11 10 Z" fill="none" stroke="#4d7ff5" stroke-width="1"/></svg>
<svg class="ab" style="left:1059px;top:483px" width="15" height="14" viewBox="0 0 15 14"><path d="M2.2 9 V7 Q2.2 2 7.2 2 Q12.2 2 12.2 7 V9" fill="none" stroke="#4d7ff5" stroke-width="1"/><rect x="1.8" y="8" width="2.6" height="4.2" rx="0.8" fill="none" stroke="#4d7ff5" stroke-width="1"/><rect x="10" y="8" width="2.6" height="4.2" rx="0.8" fill="none" stroke="#4d7ff5" stroke-width="1"/></svg>
<svg class="ab" style="left:1059px;top:505px" width="15" height="15" viewBox="0 0 15 15"><circle cx="7.3" cy="7.5" r="5.5" fill="none" stroke="#4d7ff5" stroke-width="1"/><circle cx="5.4" cy="6.3" r="0.7" fill="#4d7ff5"/><circle cx="9.2" cy="6.3" r="0.7" fill="#4d7ff5"/><path d="M4.9 9 Q7.3 11 9.7 9" fill="none" stroke="#4d7ff5" stroke-width="0.9"/></svg>
<div class="t" style="left:186.5px;top:23.2px;font-size:9px;color:rgba(0,0,0,0.07);transform:rotate(-16deg)">演示版</div>
<div class="t" style="left:548.0px;top:23.2px;font-size:9px;color:rgba(0,0,0,0.07);transform:rotate(-16deg)">演示版</div>
<div class="t" style="left:909.5px;top:23.2px;font-size:9px;color:rgba(0,0,0,0.07);transform:rotate(-16deg)">演示版</div>
<div class="t" style="left:17.6px;top:68.0px;font-size:9px;color:rgba(0,0,0,0.14);transform:rotate(-16deg)">演示版</div>
<div class="t" style="left:379.1px;top:68.0px;font-size:9px;color:rgba(0,0,0,0.14);transform:rotate(-16deg)">演示版</div>
<div class="t" style="left:740.6px;top:68.0px;font-size:9px;color:rgba(0,0,0,0.14);transform:rotate(-16deg)">演示版</div>
<div class="t" style="left:210.2px;top:112.8px;font-size:9px;color:rgba(0,0,0,0.14);transform:rotate(-16deg)">演示版</div>
<div class="t" style="left:571.6px;top:112.8px;font-size:9px;color:rgba(0,0,0,0.14);transform:rotate(-16deg)">演示版</div>
<div class="t" style="left:933.1px;top:112.8px;font-size:9px;color:rgba(0,0,0,0.14);transform:rotate(-16deg)">演示版</div>
<div class="t" style="left:41.2px;top:157.6px;font-size:9px;color:rgba(0,0,0,0.14);transform:rotate(-16deg)">演示版</div>
<div class="t" style="left:402.7px;top:157.6px;font-size:9px;color:rgba(0,0,0,0.14);transform:rotate(-16deg)">演示版</div>
<div class="t" style="left:764.2px;top:157.6px;font-size:9px;color:rgba(0,0,0,0.14);transform:rotate(-16deg)">演示版</div>
<div class="t" style="left:233.8px;top:202.4px;font-size:9px;color:rgba(0,0,0,0.14);transform:rotate(-16deg)">演示版</div>
<div class="t" style="left:595.3px;top:202.4px;font-size:9px;color:rgba(0,0,0,0.14);transform:rotate(-16deg)">演示版</div>
<div class="t" style="left:956.8px;top:202.4px;font-size:9px;color:rgba(0,0,0,0.14);transform:rotate(-16deg)">演示版</div>
<div class="t" style="left:64.8px;top:247.2px;font-size:9px;color:rgba(0,0,0,0.14);transform:rotate(-16deg)">演示版</div>
<div class="t" style="left:426.3px;top:247.2px;font-size:9px;color:rgba(0,0,0,0.14);transform:rotate(-16deg)">演示版</div>
<div class="t" style="left:787.8px;top:247.2px;font-size:9px;color:rgba(0,0,0,0.14);transform:rotate(-16deg)">演示版</div>
<div class="t" style="left:257.4px;top:292.0px;font-size:9px;color:rgba(0,0,0,0.14);transform:rotate(-16deg)">演示版</div>
<div class="t" style="left:618.9px;top:292.0px;font-size:9px;color:rgba(0,0,0,0.14);transform:rotate(-16deg)">演示版</div>
<div class="t" style="left:980.4px;top:292.0px;font-size:9px;color:rgba(0,0,0,0.14);transform:rotate(-16deg)">演示版</div>
<div class="t" style="left:88.4px;top:336.8px;font-size:9px;color:rgba(0,0,0,0.14);transform:rotate(-16deg)">演示版</div>
<div class="t" style="left:449.9px;top:336.8px;font-size:9px;color:rgba(0,0,0,0.14);transform:rotate(-16deg)">演示版</div>
<div class="t" style="left:811.4px;top:336.8px;font-size:9px;color:rgba(0,0,0,0.14);transform:rotate(-16deg)">演示版</div>
<div class="t" style="left:281.0px;top:381.6px;font-size:9px;color:rgba(0,0,0,0.14);transform:rotate(-16deg)">演示版</div>
<div class="t" style="left:642.5px;top:381.6px;font-size:9px;color:rgba(0,0,0,0.14);transform:rotate(-16deg)">演示版</div>
<div class="t" style="left:1004.0px;top:381.6px;font-size:9px;color:rgba(0,0,0,0.14);transform:rotate(-16deg)">演示版</div>
<div class="t" style="left:112.0px;top:426.4px;font-size:9px;color:rgba(0,0,0,0.14);transform:rotate(-16deg)">演示版</div>
<div class="t" style="left:473.5px;top:426.4px;font-size:9px;color:rgba(0,0,0,0.14);transform:rotate(-16deg)">演示版</div>
<div class="t" style="left:835.0px;top:426.4px;font-size:9px;color:rgba(0,0,0,0.14);transform:rotate(-16deg)">演示版</div>
<div class="t" style="left:304.5px;top:471.2px;font-size:9px;color:rgba(0,0,0,0.14);transform:rotate(-16deg)">演示版</div>
<div class="t" style="left:666.0px;top:471.2px;font-size:9px;color:rgba(0,0,0,0.14);transform:rotate(-16deg)">演示版</div>
<div class="t" style="left:1027.5px;top:471.2px;font-size:9px;color:rgba(0,0,0,0.14);transform:rotate(-16deg)">演示版</div>
<div class="t" style="left:135.6px;top:516.0px;font-size:9px;color:rgba(0,0,0,0.14);transform:rotate(-16deg)">演示版</div>
<div class="t" style="left:497.1px;top:516.0px;font-size:9px;color:rgba(0,0,0,0.14);transform:rotate(-16deg)">演示版</div>
<div class="t" style="left:858.6px;top:516.0px;font-size:9px;color:rgba(0,0,0,0.14);transform:rotate(-16deg)">演示版</div>
<div class="t" style="left:-33.3px;top:560.8px;font-size:9px;color:rgba(0,0,0,0.14);transform:rotate(-16deg)">演示版</div>
<div class="t" style="left:328.2px;top:560.8px;font-size:9px;color:rgba(0,0,0,0.14);transform:rotate(-16deg)">演示版</div>
<div class="t" style="left:689.7px;top:560.8px;font-size:9px;color:rgba(0,0,0,0.14);transform:rotate(-16deg)">演示版</div>
<div class="t" style="left:1051.2px;top:560.8px;font-size:9px;color:rgba(0,0,0,0.14);transform:rotate(-16deg)">演示版</div>
</body></html>
